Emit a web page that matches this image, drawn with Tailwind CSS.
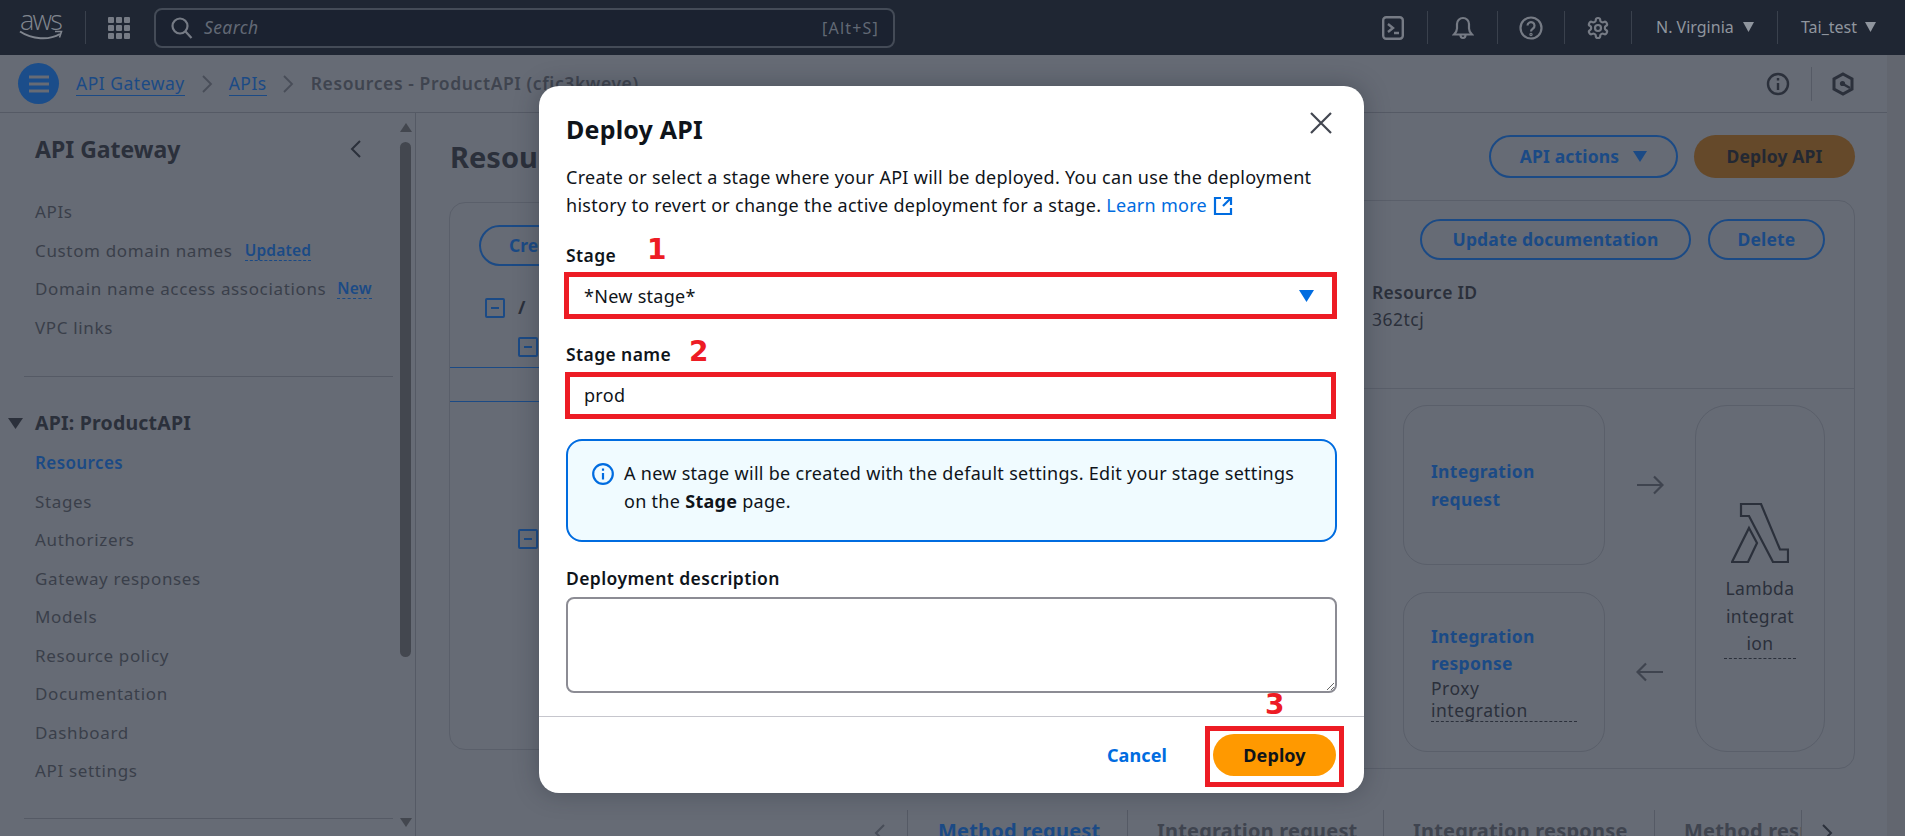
<!doctype html>
<html lang="en">
<head>
<meta charset="utf-8">
<title>Deploy API</title>
<script src="https://cdn.jsdelivr.net/npm/@tailwindcss/browser@4"></script>
</head>
<body class="m-0 bg-[#666b75]">
<div class="relative w-[1905px] h-[836px] overflow-hidden bg-[#666b75] font-['Noto_Sans',sans-serif] text-[17.5px] text-[#2b303b]">

  <!-- Top navigation -->
  <header class="flex items-center h-[55px] bg-[#1f2633] text-[#8f959e]">
    <div class="relative w-[86px] h-[33px] shrink-0 border-r border-[#3a414d]">
      <span class="absolute left-[20px] top-[-6px] text-[27px] leading-[30px] text-[#80858e] font-['Open_Sans',sans-serif] font-light tracking-[-1.8px]">aws</span>
      <svg class="absolute left-[19px] top-[19px]" width="44" height="11" viewBox="0 0 44 11" fill="none" stroke="#80858e" stroke-width="2"><path d="M1 1.500c12 8 29 9 40 2.500"/><path d="M36 1.500l6.500 0-2 6" stroke-width="1.6"/></svg>
    </div>
    <svg class="ml-[22px] shrink-0" width="22" height="22" viewBox="0 0 22 22" fill="#767b85"><rect x="0" y="0" width="6" height="6" rx="1"/><rect x="8" y="0" width="6" height="6" rx="1"/><rect x="16" y="0" width="6" height="6" rx="1"/><rect x="0" y="8" width="6" height="6" rx="1"/><rect x="8" y="8" width="6" height="6" rx="1"/><rect x="16" y="8" width="6" height="6" rx="1"/><rect x="0" y="16" width="6" height="6" rx="1"/><rect x="8" y="16" width="6" height="6" rx="1"/><rect x="16" y="16" width="6" height="6" rx="1"/></svg>
    <div class="ml-[24px] flex items-center w-[741px] h-[40px] rounded-[8px] border-2 border-[#444b57] bg-[#1b2230] pl-[15px] pr-[14px]">
      <svg width="22" height="22" viewBox="0 0 22 22" fill="none" stroke="#767b85" stroke-width="2.2"><circle cx="9" cy="9" r="7.5"/><path d="M14.5 14.5l6 6.5"/></svg>
      <span class="ml-[11px] italic text-[#626975] tracking-[0.4px]">Search</span>
      <span class="ml-auto text-[16px] tracking-[1.2px] text-[#626975]">[Alt+S]</span>
    </div>
    <div class="ml-auto flex items-center h-full">
      <div class="flex items-center justify-center w-[70px] h-[33px] border-r border-[#3a414d]">
        <svg width="22" height="24" viewBox="0 0 22 24" fill="none" stroke="#767b85" stroke-width="2.400"><rect x="1.200" y="1.200" width="19.600" height="21.600" rx="3"/><path d="M6 8l5 4-5 4M12 17h5"/></svg>
      </div>
      <div class="flex items-center justify-center w-[70px] h-[33px] border-r border-[#3a414d]">
        <svg width="22" height="24" viewBox="0 0 22 24" fill="none" stroke="#767b85" stroke-width="2.200"><path d="M2 18.500c2-2 3-3 3-6V8a6 6 0 0 1 12 0v4.500c0 3 1 4 3 6z"/><path d="M8.500 19c0 4 5 4 5 0"/></svg>
      </div>
      <div class="flex items-center justify-center w-[67px] h-[33px] border-r border-[#3a414d]">
        <svg width="24" height="24" viewBox="0 0 24 24" fill="none" stroke="#767b85" stroke-width="2.200"><circle cx="12" cy="12" r="10.500"/><path d="M8.500 9.500a3.500 3.500 0 1 1 5.500 3c-1.300 1-2 1.500-2 3"/><circle cx="12" cy="18.500" r="0.6"/></svg>
      </div>
      <div class="flex items-center justify-center w-[67px] h-[33px] border-r border-[#3a414d]">
        <svg width="24" height="24" viewBox="0 0 24 24" fill="none" stroke="#767b85" stroke-width="2.200"><path d="M12.220 2h-.44a2 2 0 0 0-2 2v.18a2 2 0 0 1-1 1.730l-.43.250a2 2 0 0 1-2 0l-.15-.080a2 2 0 0 0-2.730.730l-.22.380a2 2 0 0 0 .730 2.730l.15.100a2 2 0 0 1 1 1.720v.510a2 2 0 0 1-1 1.740l-.15.090a2 2 0 0 0-.730 2.730l.22.380a2 2 0 0 0 2.730.730l.15-.080a2 2 0 0 1 2 0l.43.250a2 2 0 0 1 1 1.730V20a2 2 0 0 0 2 2h.44a2 2 0 0 0 2-2v-.18a2 2 0 0 1 1-1.730l.43-.250a2 2 0 0 1 2 0l.15.080a2 2 0 0 0 2.730-.730l.22-.390a2 2 0 0 0-.730-2.730l-.15-.080a2 2 0 0 1-1-1.740v-.500a2 2 0 0 1 1-1.740l.15-.090a2 2 0 0 0 .730-2.730l-.22-.380a2 2 0 0 0-2.730-.730l-.15.080a2 2 0 0 1-2 0l-.43-.250a2 2 0 0 1-1-1.730V4a2 2 0 0 0-2-2z"/><circle cx="12" cy="12" r="3"/></svg>
      </div>
      <div class="flex items-center w-[146px] h-[33px] pl-[24px] pb-[2px] border-r border-[#3a414d] text-[16px]">
        N. Virginia
        <svg class="ml-[9px]" width="11" height="10" viewBox="0 0 11 10" fill="#8f959e"><path d="M0 0h11L5.500 10z"/></svg>
      </div>
      <div class="flex items-center w-[127px] h-[33px] pl-[23px] pb-[2px] text-[16px]">
        Tai_test
        <svg class="ml-[8px]" width="11" height="10" viewBox="0 0 11 10" fill="#8f959e"><path d="M0 0h11L5.500 10z"/></svg>
      </div>
    </div>
  </header>

  <div class="flex h-[781px]">
    <div class="w-[1887px] shrink-0">
      <!-- Breadcrumb bar -->
      <div class="flex items-center h-[58px] border-b border-[#555a65] pl-[18px]">
        <div class="flex items-center justify-center w-[41px] h-[41px] rounded-full bg-[#1b4d8a]">
          <svg width="20" height="18" viewBox="0 0 20 18" stroke="#666b75" stroke-width="3"><path d="M0 2h20M0 9h20M0 16h20"/></svg>
        </div>
        <a class="ml-[17px] text-[#1b4a85] border-b border-[#1b4a85] leading-[24px] tracking-[0.5px]">API Gateway</a>
        <svg class="ml-[17px]" width="11" height="18" viewBox="0 0 11 18" fill="none" stroke="#484d58" stroke-width="1.800"><path d="M1 1l8 8-8 8"/></svg>
        <a class="ml-[16px] text-[#1b4a85] border-b border-[#1b4a85] leading-[24px] tracking-[0.5px]">APIs</a>
        <svg class="ml-[16px]" width="11" height="18" viewBox="0 0 11 18" fill="none" stroke="#484d58" stroke-width="1.800"><path d="M1 1l8 8-8 8"/></svg>
        <span class="ml-[17px] font-semibold text-[#3f444f] tracking-[0.6px]">Resources - ProductAPI (cfic3kweve)</span>
        <div class="ml-auto flex items-center">
          <svg width="24" height="24" viewBox="0 0 24 24" fill="none" stroke="#2b303b" stroke-width="2.400"><circle cx="12" cy="12" r="10"/><path d="M12 11v7"/><path d="M12 6v2.500"/></svg>
          <div class="ml-[21px] w-px h-[34px] bg-[#555a65]"></div>
          <svg class="ml-[20px] mr-[33px]" width="22" height="24" viewBox="0 0 22 24" fill="none" stroke="#2b303b" stroke-width="3"><path d="M11 2l9 5v10l-9 5-9-5V7z"/><circle cx="10.500" cy="11.500" r="2.600" fill="#2b303b" stroke="none"/><path d="M11 12l7 4" stroke-width="2.400"/></svg>
        </div>
      </div>

      <div class="flex h-[723px]">
        <!-- Side navigation -->
        <aside class="relative w-[416px] shrink-0 border-r border-[#555a65] pl-[35px]">
          <div class="flex items-center justify-between h-[72px] pr-[54px]">
            <span class="text-[23px] font-bold text-[#2b303b]">API Gateway</span>
            <svg width="11" height="18" viewBox="0 0 11 18" fill="none" stroke="#2b303b" stroke-width="2"><path d="M10 1L2 9l8 8"/></svg>
          </div>
          <nav class="mt-[8px] text-[17px] tracking-[0.65px] text-[#3a3f4a]">
            <div class="flex items-center h-[38.4px]">APIs</div>
            <div class="flex items-center h-[38.4px]">Custom domain names<span class="ml-[12px] text-[15.5px] tracking-[0.2px] font-semibold text-[#1b4a85] border-b border-dashed border-[#1b4a85] leading-[20px]">Updated</span></div>
            <div class="flex items-center h-[38.4px]">Domain name access associations<span class="ml-[11px] text-[15.5px] tracking-[0.2px] font-semibold text-[#1b4a85] border-b border-dashed border-[#1b4a85] leading-[20px]">New</span></div>
            <div class="flex items-center h-[38.4px]">VPC links</div>
          </nav>
          <div class="mt-[29px] ml-[-11px] mr-[22px] h-px bg-[#555a65]"></div>
          <div class="relative flex items-center mt-[27px] h-[38.4px] text-[19.5px] tracking-[0.2px] font-bold text-[#2b303b]">
            <svg class="absolute left-[-27px] top-[14px]" width="15" height="11" viewBox="0 0 15 11" fill="#2b303b"><path d="M0 0h15L7.500 11z"/></svg>
            API: ProductAPI
          </div>
          <nav class="mt-[2px] text-[17px] tracking-[0.65px] text-[#3a3f4a]">
            <div class="flex items-center h-[38.5px] font-semibold tracking-[0.4px] text-[#1b4a85]">Resources</div>
            <div class="flex items-center h-[38.5px]">Stages</div>
            <div class="flex items-center h-[38.5px]">Authorizers</div>
            <div class="flex items-center h-[38.5px]">Gateway responses</div>
            <div class="flex items-center h-[38.5px]">Models</div>
            <div class="flex items-center h-[38.5px]">Resource policy</div>
            <div class="flex items-center h-[38.5px]">Documentation</div>
            <div class="flex items-center h-[38.5px]">Dashboard</div>
            <div class="flex items-center h-[38.5px]">API settings</div>
          </nav>
          <div class="mt-[28px] ml-[-11px] mr-[22px] h-px bg-[#555a65]"></div>
          <!-- scrollbar -->
          <svg class="absolute left-[400px] top-[10px]" width="12" height="10" viewBox="0 0 12 10" fill="#43474f"><path d="M6 0l6 9H0z"/></svg>
          <div class="absolute left-[400px] top-[29px] w-[11px] h-[515px] rounded-full bg-[#43474f]"></div>
          <svg class="absolute left-[400px] top-[705px]" width="12" height="10" viewBox="0 0 12 10" fill="#43474f"><path d="M0 0h12L6 9z"/></svg>
        </aside>

        <!-- Main -->
        <main class="flex-1 pl-[33px] pr-[32px]">
          <div class="flex items-center pt-[22px] pb-[1px] h-[66px]">
            <h1 class="ml-[1px] text-[29px] font-bold text-[#2b303b]">Resources</h1>
            <button class="ml-auto flex items-center justify-center w-[189px] h-[43px] rounded-full border-2 border-[#1b4a85] font-bold tracking-[0.15px] text-[#1b4a85]">API actions
              <svg class="ml-[14px]" width="14" height="11" viewBox="0 0 14 11" fill="#1b4a85"><path d="M0 0h14L7 11z"/></svg>
            </button>
            <button class="ml-[16px] flex items-center justify-center w-[161px] h-[43px] rounded-full bg-[#65492a] font-bold tracking-[0.15px] text-[#232833]">Deploy API</button>
          </div>

          <div class="flex gap-[20px] mt-[21px] items-start">
            <!-- Tree card -->
            <section class="relative mt-[2px] w-[500px] h-[548px] rounded-[16px] border border-[#5a5f6a]">
              <button class="absolute left-[29px] top-[22px] w-[160px] h-[41px] rounded-full border-2 border-[#1b4a85] font-bold text-[#1b4a85] text-left pl-[28px]">Create</button>
              <svg class="absolute left-[35px] top-[95px]" width="20" height="20" viewBox="0 0 20 20" fill="none" stroke="#1b4a85" stroke-width="2"><rect x="1" y="1" width="18" height="18" rx="1"/><path d="M6 10h8"/></svg>
              <span class="absolute left-[68px] top-[91px] font-bold text-[#2b303b] text-[18px]">/</span>
              <svg class="absolute left-[68px] top-[134px]" width="20" height="20" viewBox="0 0 20 20" fill="none" stroke="#1b4a85" stroke-width="2"><rect x="1" y="1" width="18" height="18" rx="1"/><path d="M6 10h8"/></svg>
              <div class="absolute left-0 right-0 top-[164px] h-[35px] border-y border-[#1b4a85]"></div>
              <svg class="absolute left-[68px] top-[326px]" width="20" height="20" viewBox="0 0 20 20" fill="none" stroke="#1b4a85" stroke-width="2"><rect x="1" y="1" width="18" height="18" rx="1"/><path d="M6 10h8"/></svg>
            </section>

            <!-- Detail card -->
            <section class="flex-1 h-[569px] rounded-[16px] border border-[#5a5f6a] overflow-hidden">
              <div class="flex justify-end items-center gap-[17px] pt-[18px] pr-[29px]">
                <button class="w-[271px] h-[41px] rounded-full border-2 border-[#1b4a85] font-bold tracking-[0.15px] text-[#1b4a85]">Update documentation</button>
                <button class="w-[117px] h-[41px] rounded-full border-2 border-[#1b4a85] font-bold tracking-[0.15px] text-[#1b4a85]">Delete</button>
              </div>
              <div class="flex justify-end h-[129px] border-b border-[#5a5f6a]">
                <div class="w-[482px] pt-[19px] leading-[27px]">
                  <div class="font-semibold tracking-[0.3px] text-[#2b303b]">Resource ID</div>
                  <div class="tracking-[0.5px] text-[#2b303b]">362tcj</div>
                </div>
              </div>
              <div class="flex justify-end items-stretch pt-[16px] pr-[29px]">
                <div class="flex flex-col gap-[27px]">
                  <div class="flex flex-col justify-center w-[202px] h-[160px] rounded-[24px] border border-[#5a5f6a] px-[27px] font-bold leading-[28px] tracking-[0.3px] text-[#1b4a85]">
                    <span>Integration</span><span>request</span>
                  </div>
                  <div class="flex flex-col justify-center w-[202px] h-[160px] rounded-[24px] border border-[#5a5f6a] px-[27px]">
                    <span class="font-bold leading-[28px] tracking-[0.3px] text-[#1b4a85]">Integration</span>
                    <span class="font-bold leading-[27px] tracking-[0.3px] text-[#1b4a85]">response</span>
                    <span class="leading-[22px] tracking-[0.5px] text-[#2b303b] border-b border-dashed border-[#2b303b]">Proxy<br>integration</span>
                  </div>
                </div>
                <div class="flex flex-col items-center gap-[167px] w-[90px] pt-[70px]">
                  <svg width="28" height="20" viewBox="0 0 28 20" fill="none" stroke="#3f444f" stroke-width="2.200"><path d="M1 10h25M18 1.500l8.500 8.500-8.500 8.500"/></svg>
                  <svg width="28" height="20" viewBox="0 0 28 20" fill="none" stroke="#3f444f" stroke-width="2.200"><path d="M27 10H2M10 1.500L1.500 10l8.500 8.500"/></svg>
                </div>
                <div class="flex flex-col items-center justify-center w-[130px] h-[347px] rounded-[32px] border border-[#5a5f6a] pt-[5px] text-center">
                  <svg width="58" height="60" viewBox="0 0 58 60" fill="none" stroke="#2b303b" stroke-width="2.200"><path d="M10 1h20l19 45.500h8V59H42L18 13H10z"/><path d="M18 25l8 15-9 19H1z"/></svg>
                  <div class="mt-[12px] px-[2px] leading-[27.500px] tracking-[0.35px] text-[#2b303b] border-b border-dashed border-[#2b303b]">Lambda<br>integrat<br>ion</div>
                </div>
              </div>
            </section>
          </div>

          <!-- Bottom tabs -->
          <div class="flex items-start mt-[41px] pl-[425px]">
            <svg class="mt-[14px] mr-[22px]" width="11" height="18" viewBox="0 0 11 18" fill="none" stroke="#484d58" stroke-width="2"><path d="M10 1L2 9l8 8"/></svg>
            <div class="w-[220px] h-[26px] border-l border-[#555a65] pl-[30px] pt-[8px] font-bold text-[20px] tracking-[0.2px] leading-[26px] text-[#1b4a85] whitespace-nowrap">Method request</div>
            <div class="w-[256px] h-[26px] border-l border-[#555a65] pl-[29px] pt-[8px] font-bold text-[20px] tracking-[0.2px] leading-[26px] text-[#3f444f] whitespace-nowrap">Integration request</div>
            <div class="w-[271px] h-[26px] border-l border-[#555a65] pl-[29px] pt-[8px] font-bold text-[20px] tracking-[0.2px] leading-[26px] text-[#3f444f] whitespace-nowrap">Integration response</div>
            <div class="w-[148px] h-[26px] border-l border-[#555a65] pl-[29px] pt-[8px] font-bold text-[20px] tracking-[0.2px] leading-[26px] text-[#3f444f] whitespace-nowrap overflow-hidden border-r">Method response</div>
            <svg class="mt-[14px] ml-[20px] shrink-0" width="11" height="18" viewBox="0 0 11 18" fill="none" stroke="#2b303b" stroke-width="2"><path d="M1 1l8 8-8 8"/></svg>
          </div>
        </main>
      </div>
    </div>
    <div class="w-[18px] bg-[#62666f]"></div>
  </div>

  <!-- Modal -->
  <div role="dialog" class="absolute left-[539px] top-[86px] w-[825px] h-[707px] rounded-[20px] bg-white text-[#0f141a] text-[18px] tracking-[0.29px] shadow-[0_0_24px_rgba(30,35,45,0.35)]">
    <div class="flex items-start justify-between h-[60px] px-[27px] pt-[23px]">
      <h2 class="text-[25px] leading-[40px] font-bold tracking-[0.2px]">Deploy API</h2>
      <svg class="mt-[3px] mr-[5px]" width="22" height="22" viewBox="0 0 22 22" fill="none" stroke="#424650" stroke-width="2.200"><path d="M1 1l20 20M21 1L1 21"/></svg>
    </div>
    <div class="px-[27px]">
      <p class="mt-[18px] leading-[27.500px]">Create or select a stage where your API will be deployed. You can use the deployment history to revert or change the active deployment for a stage. <a class="text-[#006ce0]">Learn more</a>
        <svg class="inline-block align-[-4px] ml-[1px]" width="20" height="20" viewBox="0 0 20 20" fill="none" stroke="#006ce0" stroke-width="2.200"><path d="M8 2H2v16h16v-6M11 2h7v7M18 2l-8 8"/></svg></p>
      <label class="block mt-[24px] leading-[24px] text-[17.5px] tracking-[0.4px] font-semibold">Stage</label>
      <div class="flex items-center justify-between mt-[10px] h-[38px] pl-[18px] pr-[23px] rounded-[8px]">
        <span>*New stage*</span>
        <svg width="15" height="12" viewBox="0 0 15 12" fill="#006ce0"><path d="M0 0h15L7.500 12z"/></svg>
      </div>
      <label class="block mt-[27px] leading-[24px] text-[17.5px] tracking-[0.4px] font-semibold">Stage name</label>
      <div class="flex items-center mt-[11px] h-[37px] pl-[18px]">prod</div>
      <div class="flex gap-[10px] mt-[25px] h-[103px] rounded-[16px] border-2 border-[#006ce0] bg-[#f0fbff] pl-[24px] pr-[24px] pt-[19px] leading-[27.500px]">
        <svg class="shrink-0 mt-[3px]" width="22" height="22" viewBox="0 0 22 22" fill="none" stroke="#006ce0" stroke-width="2.200"><circle cx="11" cy="11" r="9.800"/><path d="M11 10v6.500M11 5.500v2.200"/></svg>
        <p>A new stage will be created with the default settings. Edit your stage settings on the <strong class="font-bold">Stage</strong> page.</p>
      </div>
      <label class="block mt-[24px] leading-[24px] text-[17.5px] tracking-[0.4px] font-semibold">Deployment description</label>
      <textarea class="block mt-[7px] w-full h-[96px] rounded-[8px] border-2 border-[#8c8c94] bg-white"></textarea>
    </div>
    <div class="flex items-center justify-end mt-[23px] h-[77px] border-t border-[#c6c6cd] pr-[28px] tracking-[0.1px]">
      <a class="font-bold text-[#006ce0]">Cancel</a>
      <button class="ml-[46px] w-[123px] h-[42px] rounded-full bg-[#ff9900] font-bold text-[#0f141a]">Deploy</button>
    </div>

    <!-- Tutorial annotations -->
    <div class="absolute left-[25px] top-[186px] w-[773px] h-[47px] border-[5px] border-[#ed1c24]"></div>
    <div class="absolute left-[26px] top-[286px] w-[771px] h-[47px] border-[5px] border-[#ed1c24]"></div>
    <div class="absolute left-[666px] top-[640px] w-[139px] h-[61px] border-[5px] border-[#ed1c24]"></div>
    <span class="absolute left-[108px] top-[148px] text-[28px] leading-[32px] tracking-normal font-bold font-['DejaVu_Sans',sans-serif] text-[#ed1c24]">1</span>
    <span class="absolute left-[150px] top-[250px] text-[28px] leading-[32px] tracking-normal font-bold font-['DejaVu_Sans',sans-serif] text-[#ed1c24]">2</span>
    <span class="absolute left-[726px] top-[603px] text-[28px] leading-[32px] tracking-normal font-bold font-['DejaVu_Sans',sans-serif] text-[#ed1c24]">3</span>
  </div>
</div>
</body>
</html>
